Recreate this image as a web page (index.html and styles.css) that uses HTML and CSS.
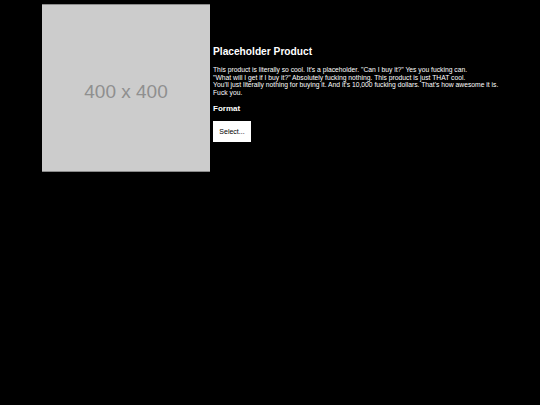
FILE: index.html
```html
<!DOCTYPE html>
<html>
<head>
<meta charset="utf-8">
<link rel="stylesheet" href="styles.css">
</head>
<body>
<div class="product">
  <div class="image"><span class="image-label">400 x 400</span></div>
  <div class="info">
    <h1 class="title">Placeholder Product</h1>
    <p class="desc">This product is literally so cool. It's a placeholder. "Can I buy it?" Yes you fucking can.<br>"What will I get if I buy it?" Absolutely fucking nothing. This product is just THAT cool.<br>You'll just literally nothing for buying it. And it's 10,000 fucking dollars. That's how awesome it is. Fuck you.</p>
    <h2 class="format">Format</h2>
    <button class="select">Select...</button>
  </div>
</div>
</body>
</html>
```
FILE: styles.css
```css
html, body {
  margin: 0;
  padding: 0;
  background: #000;
  color: #fff;
  font-family: "Liberation Sans", Arial, sans-serif;
}
.product {
  display: flex;
  width: 460px;
  margin-left: 42px;
  padding-top: 4px;
}
.image {
  flex: 0 0 168px;
  height: 166px;
  background: #cccccc;
  border-top: 1px solid #8a8a8a;
  border-bottom: 1px solid #8a8a8a;
  display: flex;
  align-items: center;
  justify-content: center;
}
.image-label {
  font-size: 19px;
  color: #8f8f8f;
  padding-top: 7px;
}
.info {
  flex: 1;
  padding-left: 3px;
  padding-top: 41px;
}
.title {
  margin: 0;
  font-size: 10.2px;
  font-weight: bold;
  line-height: 14px;
}
.desc {
  margin: 7px 0 0;
  font-size: 6.75px;
  line-height: 7.7px;
}
.format {
  margin: 7px 0 0;
  font-size: 8px;
  font-weight: bold;
  line-height: 10px;
}
.select {
  margin-top: 7px;
  width: 38px;
  height: 21px;
  padding: 0;
  border: none;
  background: #fff;
  color: #000;
  font-family: "Liberation Sans", Arial, sans-serif;
  font-size: 7px;
}
```
